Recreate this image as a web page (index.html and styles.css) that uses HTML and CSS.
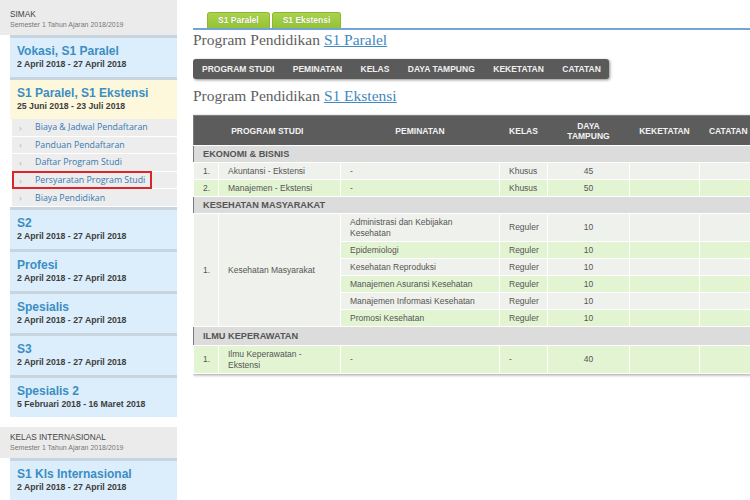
FILE: index.html
```html
<!DOCTYPE html>
<html lang="id">
<head>
<meta charset="utf-8">
<title>SIMAK - Program Pendidikan</title>
<link rel="stylesheet" href="styles.css">
</head>
<body>
<div class="page">
  <aside class="sidebar">
    <div class="group-head">
      <div class="gh-title">SIMAK</div>
      <div class="gh-sub">Semester 1 Tahun Ajaran 2018/2019</div>
    </div>
    <div class="card">
      <div class="c-title">Vokasi, S1 Paralel</div>
      <div class="c-date">2 April 2018 - 27 April 2018</div>
    </div>
    <div class="card card-active">
      <div class="c-title">S1 Paralel, S1 Ekstensi</div>
      <div class="c-date">25 Juni 2018 - 23 Juli 2018</div>
    </div>
    <ul class="menu">
      <li><span class="m-link"><span class="chev">&#x203A;</span>Biaya &amp; Jadwal Pendaftaran</span></li>
      <li><span class="m-link"><span class="chev">&#x203A;</span>Panduan Pendaftaran</span></li>
      <li><span class="m-link"><span class="chev">&#x203A;</span>Daftar Program Studi</span></li>
      <li><span class="m-link marked"><span class="chev">&#x203A;</span>Persyaratan Program Studi</span></li>
      <li><span class="m-link"><span class="chev">&#x203A;</span>Biaya Pendidikan</span></li>
    </ul>
    <div class="card">
      <div class="c-title">S2</div>
      <div class="c-date">2 April 2018 - 27 April 2018</div>
    </div>
    <div class="card">
      <div class="c-title">Profesi</div>
      <div class="c-date">2 April 2018 - 27 April 2018</div>
    </div>
    <div class="card">
      <div class="c-title">Spesialis</div>
      <div class="c-date">2 April 2018 - 27 April 2018</div>
    </div>
    <div class="card">
      <div class="c-title">S3</div>
      <div class="c-date">2 April 2018 - 27 April 2018</div>
    </div>
    <div class="card">
      <div class="c-title">Spesialis 2</div>
      <div class="c-date">5 Februari 2018 - 16 Maret 2018</div>
    </div>
    <div class="group-head group-head-second">
      <div class="gh-title">KELAS INTERNASIONAL</div>
      <div class="gh-sub">Semester 1 Tahun Ajaran 2018/2019</div>
    </div>
    <div class="card">
      <div class="c-title">S1 Kls Internasional</div>
      <div class="c-date">2 April 2018 - 27 April 2018</div>
    </div>
  </aside>

  <main class="content">
    <div class="tabs">
      <span class="tab">S1 Paralel</span>
      <span class="tab">S1 Ekstensi</span>
    </div>

    <h2 class="heading">Program Pendidikan <a href="#" class="h-link">S1 Paralel</a></h2>
    <div class="colbar">
      <span>PROGRAM STUDI</span>
      <span>PEMINATAN</span>
      <span>KELAS</span>
      <span>DAYA TAMPUNG</span>
      <span>KEKETATAN</span>
      <span>CATATAN</span>
    </div>

    <h2 class="heading heading-second">Program Pendidikan <a href="#" class="h-link">S1 Ekstensi</a></h2>

    <table class="prog">
      <colgroup>
        <col class="w-no"><col class="w-prodi"><col class="w-pem"><col class="w-kelas"><col class="w-daya"><col class="w-ket"><col class="w-cat">
      </colgroup>
      <thead>
        <tr>
          <th colspan="2">PROGRAM STUDI</th>
          <th>PEMINATAN</th>
          <th>KELAS</th>
          <th>DAYA<br>TAMPUNG</th>
          <th>KEKETATAN</th>
          <th>CATATAN</th>
        </tr>
      </thead>
      <tbody>
        <tr class="grp"><td colspan="7">EKONOMI &amp; BISNIS</td></tr>
        <tr class="gray">
          <td>1.</td><td>Akuntansi - Ekstensi</td><td>-</td><td>Khusus</td><td class="num">45</td><td></td><td></td>
        </tr>
        <tr class="green">
          <td>2.</td><td>Manajemen - Ekstensi</td><td>-</td><td>Khusus</td><td class="num">50</td><td></td><td></td>
        </tr>
        <tr class="grp"><td colspan="7">KESEHATAN MASYARAKAT</td></tr>
        <tr class="gray">
          <td rowspan="6" class="span">1.</td><td rowspan="6" class="span">Kesehatan Masyarakat</td>
          <td>Administrasi dan Kebijakan Kesehatan</td><td>Reguler</td><td class="num">10</td><td></td><td></td>
        </tr>
        <tr class="green"><td>Epidemiologi</td><td>Reguler</td><td class="num">10</td><td></td><td></td></tr>
        <tr class="gray"><td>Kesehatan Reproduksi</td><td>Reguler</td><td class="num">10</td><td></td><td></td></tr>
        <tr class="green"><td>Manajemen Asuransi Kesehatan</td><td>Reguler</td><td class="num">10</td><td></td><td></td></tr>
        <tr class="gray"><td>Manajemen Informasi Kesehatan</td><td>Reguler</td><td class="num">10</td><td></td><td></td></tr>
        <tr class="green"><td>Promosi Kesehatan</td><td>Reguler</td><td class="num">10</td><td></td><td></td></tr>
        <tr class="grp grp-tall"><td colspan="7">ILMU KEPERAWATAN</td></tr>
        <tr class="green">
          <td>1.</td><td>Ilmu Keperawatan - Ekstensi</td><td>-</td><td>-</td><td class="num">40</td><td></td><td></td>
        </tr>
      </tbody>
    </table>
  </main>
</div>
</body>
</html>
```

FILE: styles.css
```css
html, body {
  margin: 0;
  padding: 0;
  background: #ffffff;
  overflow: hidden;
}

body {
  font-family: "Liberation Sans", Arial, sans-serif;
  color: #555;
}

.page {
  display: flex;
  gap: 16px;
  width: 750px;
  height: 500px;
  overflow: hidden;
}

/* ---------- Sidebar ---------- */
.sidebar {
  width: 177px;
  flex: none;
}

.group-head {
  background: #ebebeb;
  padding: 9px 10px 5px;
  height: 21px;
}

.group-head-second {
  margin-top: 10px;
  padding-top: 5px;
  padding-bottom: 5px;
}

.gh-title {
  font-size: 8.3px;
  line-height: 11px;
  color: #444;
}

.gh-sub {
  font-size: 7px;
  line-height: 10px;
  color: #777;
}

.card {
  margin-left: 10px;
  background: #dcedfb;
  border-top: 3px solid #c8d4de;
  padding: 6px 7px 7px;
}

.card-active {
  background: #fdf8dc;
}

.c-title {
  font-size: 12px;
  line-height: 15px;
  font-weight: bold;
  color: #3b8dc3;
}

.c-date {
  font-size: 8.7px;
  line-height: 11px;
  font-weight: bold;
  color: #3d3d3d;
}

.menu {
  list-style: none;
  margin: 0 0 0 12px;
  padding: 0;
}

.menu li {
  background: #ededed;
  border-bottom: 1px solid #ffffff;
  height: 16.6px;
  display: flex;
  align-items: center;
}

.m-link {
  display: inline-flex;
  align-items: center;
  height: 100%;
  font-family: "Open Sans", "Liberation Sans", sans-serif;
  font-size: 8.8px;
  color: #3779b0;
  padding-right: 6px;
  box-sizing: border-box;
}

.chev {
  width: 23px;
  padding-left: 7px;
  box-sizing: border-box;
  color: #b5b5b5;
  font-size: 9px;
}

.marked {
  margin-left: 1px;
  outline: 2px solid #d8262c;
  outline-offset: -1px;
}

.marked .chev {
  width: 22px;
  padding-left: 6px;
}

/* ---------- Content ---------- */
.content {
  flex: 1;
  min-width: 0;
  overflow: hidden;
  padding-top: 12px;
}

.tabs {
  display: flex;
  gap: 2px;
  padding-left: 14px;
  border-bottom: 2px solid #74a4d2;
}

.tab {
  height: 15px;
  line-height: 15px;
  padding: 0 10px;
  background: linear-gradient(#aad34c, #94c236);
  border: 1px solid #8cb733;
  border-bottom: none;
  border-radius: 3px 3px 0 0;
  color: #ffffff;
  font-size: 8.5px;
  font-weight: bold;
  text-shadow: 0 0 1px rgba(0, 0, 0, 0.25);
}

.heading {
  margin: 1px 0 0;
  font-family: "Liberation Serif", "Times New Roman", serif;
  font-weight: normal;
  font-size: 15.5px;
  line-height: 18px;
  color: #5e5e5e;
}

.heading-second {
  margin-top: 8px;
}

.h-link {
  color: #3f88c0;
  text-decoration: underline;
}

.colbar {
  display: inline-flex;
  align-items: center;
  gap: 18.5px;
  margin-top: 10px;
  height: 20px;
  padding: 0 8px 0 9px;
  background: #5a5a5a;
  border-radius: 3px;
  box-shadow: 1px 1px 3px rgba(0, 0, 0, 0.45);
  color: #f0f0f0;
  font-size: 8.5px;
  font-weight: bold;
}

/* ---------- Table ---------- */
.prog {
  margin-top: 10px;
  width: 564px;
  table-layout: fixed;
  border-collapse: collapse;
  border: 1px solid #7c7c7c;
  box-shadow: 0 1px 3px rgba(0, 0, 0, 0.4);
  font-size: 8.5px;
  color: #555;
}

.w-no { width: 25px; }
.w-prodi { width: 122px; }
.w-pem { width: 159px; }
.w-kelas { width: 48px; }
.w-daya { width: 82px; }
.w-ket { width: 70px; }
.w-cat { width: 58px; }

.prog th {
  background: #5c5c5c;
  color: #f2f2f2;
  font-weight: bold;
  font-size: 8.5px;
  line-height: 10px;
  height: 29px;
  padding: 0;
  text-align: center;
}

.prog td {
  border: 1px solid #ffffff;
  padding: 2.5px 9px;
  line-height: 11px;
  vertical-align: middle;
}

.prog tr.grp td {
  background: #dcdcdc;
  font-size: 9.2px;
  font-weight: bold;
  color: #555;
  padding-left: 9px;
  border-left: none;
  border-right: none;
}

.prog tr.grp-tall td {
  padding-top: 3.5px;
  padding-bottom: 3.5px;
}

.prog tr.gray td {
  background: #eff1ec;
}

.prog tr.green td {
  background: #e3f4d3;
}

.prog td.span {
  background: #eff1ec;
}

.prog td.num {
  text-align: center;
}
```
